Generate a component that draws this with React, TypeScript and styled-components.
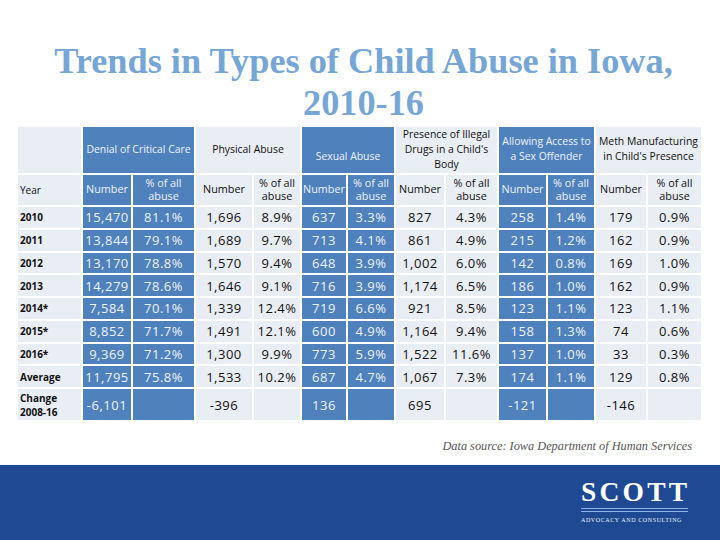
import React from 'react';
import styled, { createGlobalStyle } from 'styled-components';

const GlobalStyle = createGlobalStyle`
  body {
    margin: 0;
    background: #ffffff;
    font-family: 'Open Sans', 'Liberation Sans', sans-serif;
  }
`;

const Slide = styled.div`
  width: 720px;
  height: 540px;
  display: flex;
  flex-direction: column;
  background: #ffffff;
  overflow: hidden;
`;

const Title = styled.h1`
  margin: 0;
  padding: 40px 0 0 7px;
  text-align: center;
  font-family: 'Liberation Serif', 'Times New Roman', serif;
  font-weight: 700;
  font-size: 36.3px;
  line-height: 42px;
  color: #75a6d6;
`;

const Grid = styled.div`
  margin: 3px 0 0 18px;
  display: grid;
  grid-template-columns: 63px 48px 61px 56px 46px 44px 46px 48px 51px 47px 46px 50px 53px;
  grid-template-rows: 46px 30px repeat(8, 20.75px) 31px;
  gap: 2px;
`;

const Cell = styled.div<{ $dark?: boolean; $span?: number; $shift?: number }>`
  grid-column: span ${(p) => p.$span || 1};
  display: flex;
  align-items: center;
  justify-content: center;
  text-align: center;
  padding-top: ${(p) => p.$shift || 0}px;
  background: ${(p) => (p.$dark ? '#4f81bd' : '#e9edf4')};
  color: ${(p) => (p.$dark ? '#eef3fb' : '#111111')};
`;

const GroupHead = styled(Cell)`
  font-size: 10.4px;
  line-height: 15px;
  white-space: nowrap;
  padding-bottom: 2px;
`;

const SubHead = styled(Cell)`
  font-size: 10.8px;
  line-height: 13.5px;
  white-space: nowrap;
  padding-bottom: 2px;
`;

const Value = styled(Cell)`
  font-size: 13px;
  letter-spacing: 0.5px;
`;

const YearCell = styled(Cell)<{ $bold?: boolean }>`
  justify-content: flex-start;
  text-align: left;
  padding-left: 2px;
  font-size: 10px;
  line-height: 14px;
  font-weight: ${(p) => (p.$bold ? 700 : 400)};
`;

const Source = styled.div`
  margin-top: 19px;
  padding-right: 28px;
  text-align: right;
  font-family: 'Liberation Serif', 'Times New Roman', serif;
  font-style: italic;
  font-size: 12.3px;
  color: #555555;
`;

const Footer = styled.div`
  margin-top: auto;
  height: 75px;
  background: #1f4a93;
  display: flex;
  justify-content: flex-end;
  padding: 13px 32px 0 0;
  box-sizing: border-box;
`;

const Logo = styled.div`
  width: 107px;
  display: flex;
  flex-direction: column;
  align-items: stretch;
`;

const LogoWord = styled.div`
  font-family: 'Liberation Serif', 'Times New Roman', serif;
  font-weight: 700;
  font-size: 27.5px;
  line-height: 28px;
  letter-spacing: 3.2px;
  color: #ffffff;
  white-space: nowrap;
`;

const LogoRule = styled.div`
  height: 1px;
  margin-top: 2px;
  background: #8fb2e6;
`;

const LogoTag = styled.div`
  margin-top: 5px;
  font-family: 'Liberation Serif', 'Times New Roman', serif;
  font-size: 6px;
  line-height: 6px;
  letter-spacing: 0.6px;
  color: #e8eefa;
  white-space: nowrap;
`;

// dark columns: denial, sexual, offender
const groups = [
  { key: 'denial', lines: ['Denial of Critical Care'], dark: true },
  { key: 'physical', lines: ['Physical Abuse'], dark: false },
  { key: 'sexual', lines: ['Sexual Abuse'], dark: true, shift: 14 },
  { key: 'drugs', lines: ['Presence of Illegal', "Drugs in a Child's", 'Body'], dark: false },
  { key: 'offender', lines: ['Allowing Access to', 'a Sex Offender'], dark: true },
  { key: 'meth', lines: ['Meth Manufacturing', "in Child's Presence"], dark: false },
];

const rows: string[][] = [
  ['2010', '15,470', '81.1%', '1,696', '8.9%', '637', '3.3%', '827', '4.3%', '258', '1.4%', '179', '0.9%'],
  ['2011', '13,844', '79.1%', '1,689', '9.7%', '713', '4.1%', '861', '4.9%', '215', '1.2%', '162', '0.9%'],
  ['2012', '13,170', '78.8%', '1,570', '9.4%', '648', '3.9%', '1,002', '6.0%', '142', '0.8%', '169', '1.0%'],
  ['2013', '14,279', '78.6%', '1,646', '9.1%', '716', '3.9%', '1,174', '6.5%', '186', '1.0%', '162', '0.9%'],
  ['2014*', '7,584', '70.1%', '1,339', '12.4%', '719', '6.6%', '921', '8.5%', '123', '1.1%', '123', '1.1%'],
  ['2015*', '8,852', '71.7%', '1,491', '12.1%', '600', '4.9%', '1,164', '9.4%', '158', '1.3%', '74', '0.6%'],
  ['2016*', '9,369', '71.2%', '1,300', '9.9%', '773', '5.9%', '1,522', '11.6%', '137', '1.0%', '33', '0.3%'],
  ['Average', '11,795', '75.8%', '1,533', '10.2%', '687', '4.7%', '1,067', '7.3%', '174', '1.1%', '129', '0.8%'],
  ['Change 2008-16', '-6,101', '', '-396', '', '136', '', '695', '', '-121', '', '-146', ''],
];

const isDark = (col: number) => groups[Math.floor((col - 1) / 2)].dark;

const Lines = ({ lines }: { lines: string[] }) => (
  <span>
    {lines.map((l, i) => (
      <React.Fragment key={l}>
        {i > 0 && <br />}
        {l}
      </React.Fragment>
    ))}
  </span>
);

export default function App() {
  return (
    <Slide>
      <GlobalStyle />
      <Title>
        Trends in Types of Child Abuse in Iowa,
        <br />
        2010-16
      </Title>
      <Grid>
        <YearCell />
        {groups.map((g) => (
          <GroupHead key={g.key} $span={2} $dark={g.dark} $shift={g.shift}>
            <Lines lines={g.lines} />
          </GroupHead>
        ))}

        <YearCell>Year</YearCell>
        {groups.map((g) => (
          <React.Fragment key={g.key}>
            <SubHead $dark={g.dark}>Number</SubHead>
            <SubHead $dark={g.dark}>
              <Lines lines={['% of all', 'abuse']} />
            </SubHead>
          </React.Fragment>
        ))}

        {rows.map((r) => (
          <React.Fragment key={r[0]}>
            <YearCell $bold>
              <Lines lines={r[0].split(' ')} />
            </YearCell>
            {r.slice(1).map((v, i) => (
              <Value key={i} $dark={isDark(i + 1)}>
                {v}
              </Value>
            ))}
          </React.Fragment>
        ))}
      </Grid>
      <Source>Data source: Iowa Department of Human Services</Source>
      <Footer>
        <Logo>
          <LogoWord>SCOTT</LogoWord>
          <LogoRule />
          <LogoRule />
          <LogoTag>ADVOCACY AND CONSULTING</LogoTag>
        </Logo>
      </Footer>
    </Slide>
  );
}
